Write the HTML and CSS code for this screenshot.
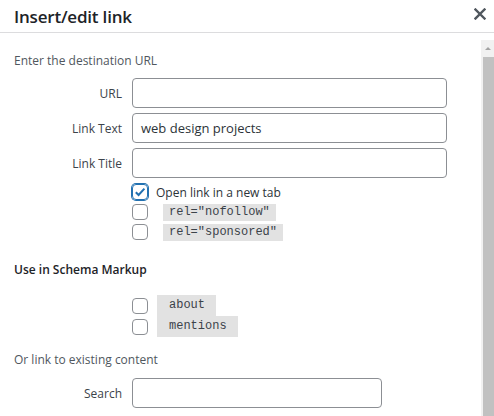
FILE: index.html
```html
<!DOCTYPE html>
<html lang="en">
<head>
    <meta charset="UTF-8">
    <meta name="viewport" content="width=device-width, initial-scale=1.0">
    <title>Insert/edit link</title>
    <link rel="stylesheet" href="styles.css">
</head>
<body>
    <div class="dialog">
        <div class="dialog-head">
            <h1>Insert/edit link</h1>
            <span class="close">
                <svg width="12" height="12" viewBox="0 0 12 12"><path d="M1.5 1.5 L10.5 10.5 M10.5 1.5 L1.5 10.5" stroke="#50575e" stroke-width="2.4" stroke-linecap="square"/></svg>
            </span>
        </div>

        <div class="dialog-body">
            <div class="content">
                <p class="note first">Enter the destination URL</p>

                <div class="field">
                    <label>URL</label>
                    <span class="input"></span>
                </div>
                <div class="field">
                    <label>Link Text</label>
                    <span class="input">web design projects</span>
                </div>
                <div class="field">
                    <label>Link Title</label>
                    <span class="input"></span>
                </div>

                <!-- link options -->
                <div class="checks">
                    <div class="check">
                        <span class="box checked">
                            <svg width="14" height="14" viewBox="0 0 14 14"><path d="M2.8 7.2 L5.6 10 L11.4 3.6" fill="none" stroke="#2271b1" stroke-width="2"/></svg>
                        </span>
                        <span class="check-text">Open link in a new tab</span>
                    </div>
                    <div class="check">
                        <span class="box"></span>
                        <code class="tight">rel="nofollow"</code>
                    </div>
                    <div class="check">
                        <span class="box"></span>
                        <code class="tight">rel="sponsored"</code>
                    </div>
                </div>

                <p class="section-title">Use in Schema Markup</p>

                <div class="checks schema">
                    <div class="check">
                        <span class="box"></span>
                        <code>about</code>
                    </div>
                    <div class="check">
                        <span class="box"></span>
                        <code>mentions</code>
                    </div>
                </div>

                <p class="note">Or link to existing content</p>

                <div class="field search">
                    <label>Search</label>
                    <span class="input short"></span>
                </div>
            </div>

            <div class="scrollbar">
                <span class="arrow"></span>
                <span class="thumb"></span>
            </div>
        </div>
    </div>
</body>
</html>
```

FILE: styles.css
```css
body {
    margin: 0;
    padding: 0;
    background: #fff;
    font-family: "Open Sans", "Noto Sans", sans-serif;
    color: #3c434a;
    overflow: hidden;
}
.dialog {
    width: 494px;
    height: 416px;
    display: flex;
    flex-direction: column;
}
.dialog-head {
    height: 32px;
    border-bottom: 1px solid #dcdcde;
    display: flex;
    align-items: center;
    justify-content: space-between;
    padding: 0 8px 0 14px;
    flex-shrink: 0;
}
.dialog-head h1 {
    margin: 0;
    font-size: 17px;
    font-weight: 600;
    color: #1d2327;
    letter-spacing: -0.2px;
}
.close {
    display: flex;
    width: 12px;
    height: 12px;
    align-self: flex-start;
    margin-top: 8px;
}
.dialog-body {
    flex: 1;
    display: flex;
    min-height: 0;
}
.content {
    flex: 1;
    padding: 0 0 0 14px;
}
.note {
    margin: 13px 0 0;
    font-size: 12px;
    line-height: 20px;
    color: #50575e;
}
.note.first {
    margin-top: 18px;
}
.field {
    display: flex;
    align-items: center;
    margin-top: 5px;
}
.note + .field {
    margin-top: 7px;
}
.note + .field.search {
    margin-top: 8px;
}
.field label {
    width: 108px;
    margin-right: 10px;
    text-align: right;
    font-size: 12px;
    color: #3c434a;
}
.input {
    box-sizing: border-box;
    width: 315px;
    height: 30px;
    border: 1px solid #8c8f94;
    border-radius: 4px;
    padding: 0 8px;
    font-size: 13px;
    line-height: 28px;
    color: #2c3338;
}
.input.short {
    width: 250px;
}
.checks {
    margin: 4px 0 0 118px;
}
.check {
    display: flex;
    align-items: center;
    height: 20px;
}
.box {
    box-sizing: border-box;
    width: 16px;
    height: 16px;
    border: 1px solid #8c8f94;
    border-radius: 4px;
    display: flex;
    align-items: center;
    justify-content: center;
    flex-shrink: 0;
}
.box.checked {
    border-color: #2271b1;
    box-shadow: 0 0 0 1px #2271b1;
}
.check-text {
    margin-left: 8px;
    font-size: 12px;
    color: #2c3338;
}
code {
    margin-left: 9px;
    font-family: "Liberation Mono", monospace;
    font-size: 12px;
    line-height: 17px;
    background: #e2e2e2;
    color: #3c434a;
    padding: 2px 11px 2px 12px;
}
code.tight {
    margin-left: 15px;
    padding: 0 6px;
}
.section-title {
    margin: 18px 0 0;
    font-size: 12px;
    font-weight: 600;
    color: #1d2327;
    line-height: 20px;
}
.checks.schema {
    margin-top: 15px;
}
.checks.schema .check {
    height: 21px;
}
.scrollbar {
    width: 13px;
    margin-top: 7px;
    background: #f1f1f1;
    display: flex;
    flex-direction: column;
    align-items: flex-end;
}
.arrow {
    width: 0;
    height: 0;
    margin: 7px 3px 0 0;
    border-left: 3px solid transparent;
    border-right: 3px solid transparent;
    border-bottom: 3px solid #a3a3a3;
}
.thumb {
    width: 11px;
    flex: 1;
    margin-top: 7px;
    background: #c1c1c1;
}
```
